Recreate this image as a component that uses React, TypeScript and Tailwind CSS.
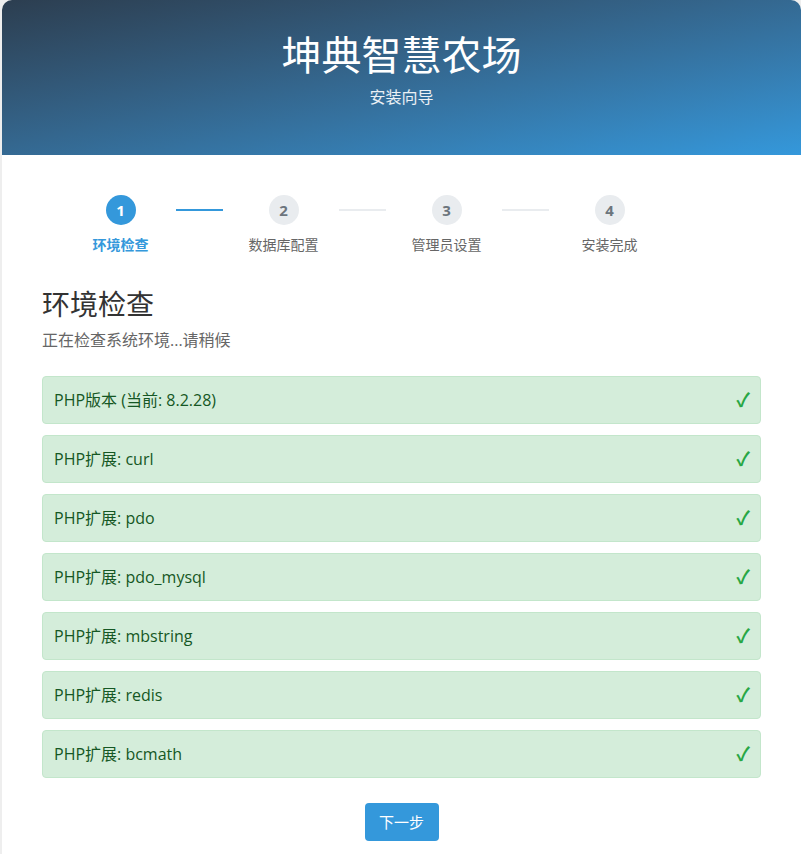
import React from "react";

const steps = [
  { n: 1, label: "环境检查" },
  { n: 2, label: "数据库配置" },
  { n: 3, label: "管理员设置" },
  { n: 4, label: "安装完成" },
];

const checks = [
  "PHP版本 (当前: 8.2.28)",
  "PHP扩展: curl",
  "PHP扩展: pdo",
  "PHP扩展: pdo_mysql",
  "PHP扩展: mbstring",
  "PHP扩展: redis",
  "PHP扩展: bcmath",
];

export default function App() {
  return (
    <div
      className="min-h-[854px] bg-[#eeeeee] pl-[2px]"
      style={{ fontFamily: '"Open Sans", "Noto Sans CJK SC", sans-serif' }}
    >
      <div className="w-[799px] bg-white rounded-t-[10px] overflow-hidden min-h-[854px]">
        <div className="h-[155px] bg-linear-to-br from-[#2c3e50] to-[#3498db] flex flex-col items-center text-white">
          <h1 className="mt-[30px] text-[40px] leading-[50px] font-normal">坤典智慧农场</h1>
          <p className="mt-[6px] text-[16px] leading-[22px] text-white/90">安装向导</p>
        </div>
        <div className="px-[40px] pt-[40px]">
          <div className="flex -ml-[3px]">
            {steps.map((s, i) => {
              const active = i === 0;
              return (
                <div key={s.n} className="relative w-[163px] flex flex-col items-center">
                  {i < steps.length - 1 && (
                    <div
                      className={`absolute top-[14px] left-[137px] w-[47px] h-[2px] ${
                        active ? "bg-[#3498db]" : "bg-[#e9ecef]"
                      }`}
                    />
                  )}
                  <div
                    className={`w-[30px] h-[30px] rounded-full flex items-center justify-center text-[15px] font-bold ${
                      active ? "bg-[#3498db] text-white" : "bg-[#e9ecef] text-[#6c757d]"
                    }`}
                  >
                    {s.n}
                  </div>
                  <div
                    className={`mt-[10px] text-[14px] leading-[20px] ${
                      active ? "text-[#3498db] font-semibold" : "text-[#666666]"
                    }`}
                  >
                    {s.label}
                  </div>
                </div>
              );
            })}
          </div>
          <h2 className="mt-[32px] text-[28px] leading-[34px] text-[#333333] font-normal">环境检查</h2>
          <p className="mt-[8px] text-[16px] leading-[22px] text-[#666666]">正在检查系统环境...请稍候</p>
          <div className="mt-[25px] flex flex-col gap-[11px]">
            {checks.map((c) => (
              <div
                key={c}
                className="flex items-center justify-between border border-[#c3e6cb] bg-[#d4edda] rounded-[4px] pl-[11px] pr-[10px] py-[12px] text-[16px] leading-[22px] text-[#155724]"
              >
                <span>{c}</span>
                <span className="text-[#28a745] text-[19px] leading-[22px] font-bold">✓</span>
              </div>
            ))}
          </div>
          <div className="mt-[25px] flex justify-center">
            <button className="w-[74px] h-[38px] bg-[#3498db] text-white text-[15px] rounded-[4px]">
              下一步
            </button>
          </div>
        </div>
      </div>
    </div>
  );
}
